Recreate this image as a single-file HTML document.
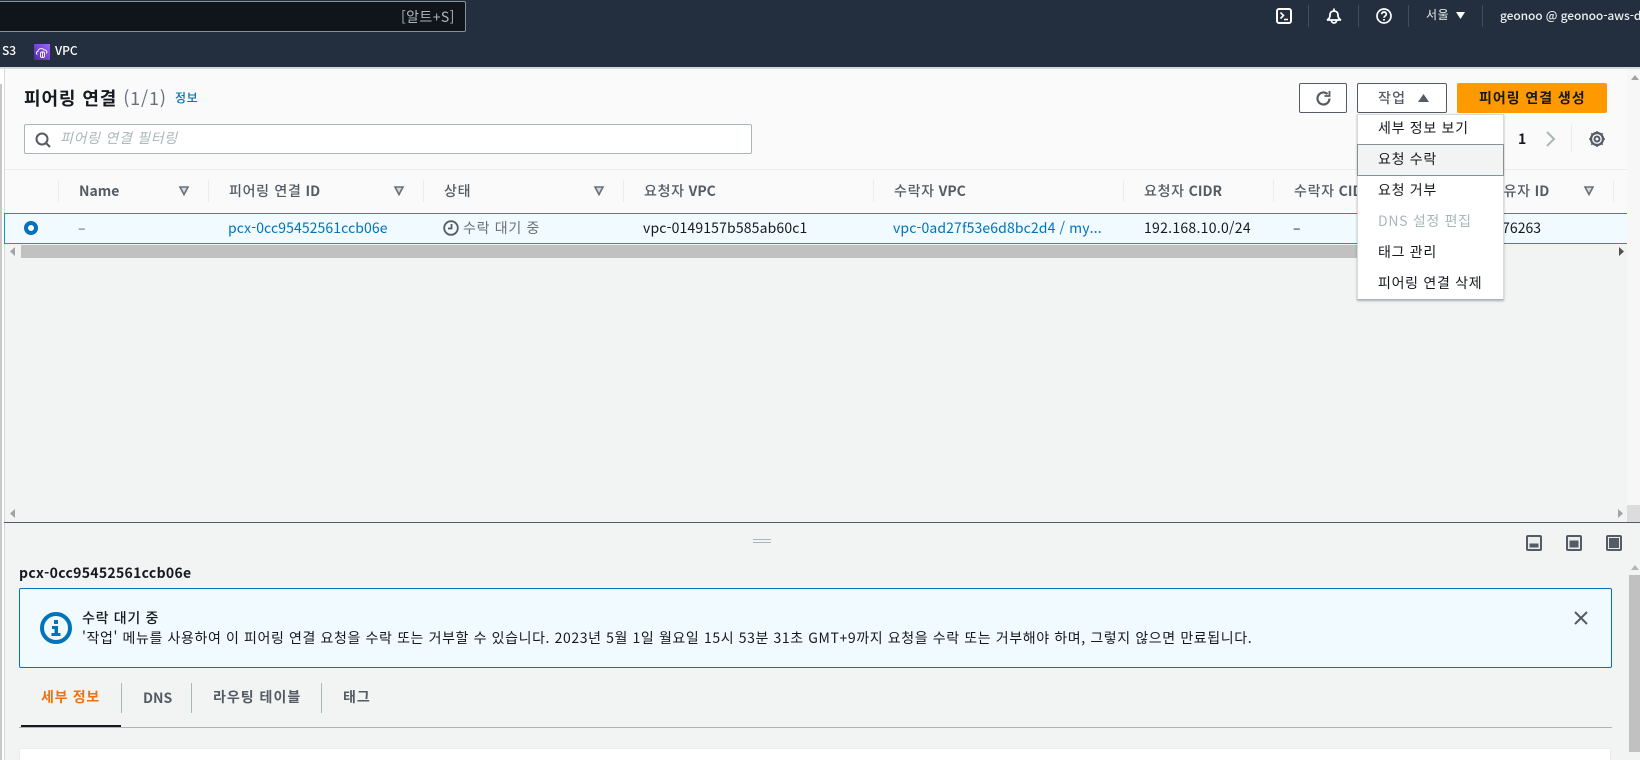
<!DOCTYPE html>
<html lang="ko">
<head>
<meta charset="utf-8">
<style>
html,body{margin:0;padding:0;width:1640px;height:760px;overflow:hidden;background:#f2f3f3}
body{position:relative;font-family:"Noto Sans CJK KR","Liberation Sans",sans-serif;font-size:14px;color:#16191f}
.a{position:absolute}
.t{position:absolute;white-space:nowrap;line-height:20px}
.b{font-weight:700}
.k{letter-spacing:.7px}
.h{font-weight:700;color:#545b64}
.h span{font-weight:500;letter-spacing:.7px}
.l{color:#0073bb}
.sep{position:absolute;width:1px;background:#eaeded;top:180px;height:22px}
svg{position:absolute;overflow:visible}
.mi{position:absolute;left:1378px;white-space:nowrap;line-height:20px;color:#16191f;letter-spacing:.7px}
</style>
</head>
<body>
<!-- nav -->
<div class="a" style="left:0;top:0;width:1640px;height:67px;background:#232f3e"></div>
<div class="a" style="left:0;top:67px;width:1640px;height:2px;background:#d5dbdb"></div>
<div class="a" style="left:-2px;top:1px;width:466px;height:29px;background:#10151c;border:1px solid #879196;border-radius:2px"></div>
<div class="t" style="left:401px;top:7px;color:#aab7b8;font-size:14px;letter-spacing:.4px">[알트+S]</div>
<div class="t" style="left:2px;top:41px;color:#fff;font-size:12px;font-weight:500">S3</div>
<div class="a" style="left:34px;top:44px;width:16px;height:16px;background:linear-gradient(45deg,#4d27a8,#a166ff)"></div>
<svg style="left:34px;top:44px" width="16" height="16" viewBox="0 0 16 16" fill="none" stroke="#fff" stroke-width=".9"><path d="M3.500 10.500C2 10 2 7.500 4 7.300 4.200 4.500 8.500 3.500 10 6c2-.5 3.500 1.500 2.500 3.500"/><rect x="6.500" y="8" width="4" height="5.500" rx="1.500"/><path d="M8.500 8v5"/></svg>
<div class="t" style="left:55px;top:41px;color:#fff;font-size:12px;font-weight:500">VPC</div>

<svg style="left:1276px;top:8px" width="16" height="16" viewBox="0 0 16 16" fill="none" stroke="#fff"><rect x="1" y="1" width="14" height="14" rx="2" stroke-width="2"/><path d="M4.500 4.500 7.500 7.500 4.500 10.500" stroke-width="1.600"/><path d="M8 11.500h4" stroke-width="1.600"/></svg>
<div class="a" style="left:1308px;top:5px;width:1px;height:22px;background:#414d5c"></div>
<svg style="left:1326px;top:8px" width="16" height="16" viewBox="0 0 16 16" fill="none" stroke="#fff" stroke-width="1.800"><path d="M1 12C3.500 11 4 9 4 7 4 4.500 5.800 3 8 3 10.200 3 12 4.500 12 7 12 9 12.500 11 15 12Z"/><path d="M8 .5v2.500"/><path d="M5.500 12.500a2.500 2.500 0 0 0 5 0"/></svg>
<div class="a" style="left:1358px;top:5px;width:1px;height:22px;background:#414d5c"></div>
<svg style="left:1376px;top:8px" width="16" height="16" viewBox="0 0 16 16" fill="none" stroke="#fff" stroke-width="1.700"><circle cx="8" cy="8" r="7"/><path d="M5.700 6.200C5.800 3.300 10.300 3.300 10.300 6.200 10.300 8 8 8 8 9.800"/><path d="M8 11v1.600"/></svg>
<div class="a" style="left:1408px;top:5px;width:1px;height:22px;background:#414d5c"></div>
<div class="t" style="left:1426px;top:5px;color:#eaeded;font-size:12px;letter-spacing:.6px">서울</div>
<svg style="left:1456px;top:12px" width="9" height="7" viewBox="0 0 9 7"><path d="M0 0h9L4.500 7Z" fill="#fff"/></svg>
<div class="a" style="left:1482px;top:5px;width:1px;height:22px;background:#414d5c"></div>
<div class="t" style="left:1500px;top:6px;color:#eaeded;font-size:12px;font-weight:500;letter-spacing:-.1px">geonoo @ geonoo-aws-dl</div>

<!-- left gutter -->
<div class="a" style="left:0;top:69px;width:4px;height:691px;background:#fff"></div>
<div class="a" style="left:0;top:84px;width:2px;height:676px;background:#c8c8c8"></div>
<div class="a" style="left:4px;top:69px;width:1px;height:691px;background:#d5dbdb"></div>

<!-- header -->
<div class="a" style="left:5px;top:69px;width:1622px;height:100px;background:#fafafa"></div>
<div class="a" style="left:5px;top:169px;width:1622px;height:44px;background:#fafafa;border-top:1px solid #eaeded;box-sizing:border-box"></div>
<div class="t b" style="left:24px;top:86px;font-size:18px;line-height:24px;letter-spacing:.9px">피어링 연결 <span style="font-weight:400;color:#687078">(1/1)</span></div>
<div class="t" style="left:175px;top:88px;font-size:12px;color:#0073bb;font-weight:500;letter-spacing:.6px">정보</div>
<div class="a" style="left:24px;top:124px;width:728px;height:30px;box-sizing:border-box;background:#fff;border:1px solid #aab7b8;border-radius:2px"></div>
<svg style="left:35px;top:132px" width="16" height="16" viewBox="0 0 16 16" fill="none" stroke="#545b64" stroke-width="2"><circle cx="7" cy="7" r="5.500"/><path d="M11 11l4 4"/></svg>
<div class="t k" style="left:60px;top:128px;font-style:italic;color:#aab7b8">피어링 연결 필터링</div>

<!-- buttons -->
<div class="a" style="left:1299px;top:83px;width:48px;height:30px;box-sizing:border-box;background:#fff;border:1px solid #545b64;border-radius:2px"></div>
<svg style="left:1315px;top:90px" width="17" height="17" viewBox="0 0 17 17" fill="none" stroke="#545b64" stroke-width="2.200"><path d="M14.500 8.500A6 6 0 1 1 12.500 4"/><path d="M14.500 1v5h-5" stroke-width="1.800"/></svg>
<div class="a" style="left:1357px;top:83px;width:90px;height:30px;box-sizing:border-box;background:#fff;border:1px solid #545b64;border-radius:2px"></div>
<div class="t" style="left:1378px;top:88px;color:#545b64;font-weight:500;letter-spacing:1.2px">작업</div>
<svg style="left:1418px;top:94px" width="11" height="8" viewBox="0 0 11 8"><path d="M0 8L5.500 0 11 8Z" fill="#545b64"/></svg>
<div class="a" style="left:1457px;top:83px;width:150px;height:30px;background:#ff9900;border-radius:2px"></div>
<div class="t" style="left:1479px;top:88px;font-weight:700;color:#16191f;letter-spacing:.95px">피어링 연결 생성</div>

<!-- pagination -->
<div class="t b" style="left:1518px;top:129px;color:#16191f">1</div>
<svg style="left:1546px;top:131px" width="10" height="16" viewBox="0 0 10 16" fill="none" stroke="#aab7b8" stroke-width="2"><path d="M1 1l7 7-7 7"/></svg>
<div class="a" style="left:1571px;top:124px;width:1px;height:28px;background:#eaeded"></div>
<svg style="left:1589px;top:131px" width="16" height="16" viewBox="0 0 16 16" fill="none" stroke="#545b64" stroke-width="2"><circle cx="8" cy="8" r="2.500"/><circle cx="8" cy="8" r="6" stroke-width="2.200"/><path d="M8 0v2M8 14v2M0 8h2M14 8h2M2.300 2.300l1.400 1.400M12.300 12.300l1.400 1.400M2.300 13.700l1.400-1.400M12.300 3.700l1.400-1.400" stroke-width="1.500"/></svg>

<!-- table head -->
<div class="sep" style="left:58px"></div>
<div class="sep" style="left:208px"></div>
<div class="sep" style="left:423px"></div>
<div class="sep" style="left:623px"></div>
<div class="sep" style="left:873px"></div>
<div class="sep" style="left:1123px"></div>
<div class="sep" style="left:1273px"></div>
<div class="sep" style="left:1613px"></div>
<div class="t h" style="left:79px;top:181px">Name</div>
<div class="t h" style="left:229px;top:181px"><span>피어링 연결</span> ID</div>
<div class="t h" style="left:444px;top:181px"><span>상태</span></div>
<div class="t h" style="left:644px;top:181px"><span>요청자</span> VPC</div>
<div class="t h" style="left:894px;top:181px"><span>수락자</span> VPC</div>
<div class="t h" style="left:1144px;top:181px"><span>요청자</span> CIDR</div>
<div class="t h" style="left:1294px;top:181px"><span>수락자</span> CIDR</div>
<div class="t h" style="left:1490px;top:181px"><span>소유자</span> ID</div>
<svg style="left:179px;top:186px" width="10" height="10" viewBox="0 0 10 10" fill="#d5dbdb" stroke="#687078" stroke-width="1.600"><path d="M1 1h8L5 8.500Z"/></svg>
<svg style="left:394px;top:186px" width="10" height="10" viewBox="0 0 10 10" fill="#d5dbdb" stroke="#687078" stroke-width="1.600"><path d="M1 1h8L5 8.500Z"/></svg>
<svg style="left:594px;top:186px" width="10" height="10" viewBox="0 0 10 10" fill="#d5dbdb" stroke="#687078" stroke-width="1.600"><path d="M1 1h8L5 8.500Z"/></svg>
<svg style="left:1584px;top:186px" width="10" height="10" viewBox="0 0 10 10" fill="#d5dbdb" stroke="#687078" stroke-width="1.600"><path d="M1 1h8L5 8.500Z"/></svg>

<!-- row -->
<div class="a" style="left:4px;top:213px;width:1623px;height:31px;box-sizing:border-box;background:#f1faff;border:1px solid #0a9cb8;border-right:0"></div>
<div class="a" style="left:24px;top:221px;width:14px;height:14px;box-sizing:border-box;border-radius:50%;background:#fff;border:4.500px solid #0073bb"></div>
<div class="t" style="left:78px;top:218px;color:#545b64">–</div>
<div class="t l" style="left:228px;top:218px;letter-spacing:.1px">pcx-0cc95452561ccb06e</div>
<svg style="left:443px;top:220px" width="16" height="16" viewBox="0 0 16 16" fill="none" stroke="#545b64" stroke-width="1.800"><circle cx="8" cy="8" r="6.800"/><path d="M8.500 4v4.500H5"/></svg>
<div class="t k" style="left:463px;top:218px;color:#687078">수락 대기 중</div>
<div class="t" style="left:643px;top:218px;letter-spacing:.15px">vpc-0149157b585ab60c1</div>
<div class="t l" style="left:893px;top:218px;letter-spacing:.12px">vpc-0ad27f53e6d8bc2d4 / my...</div>
<div class="t" style="left:1144px;top:218px;letter-spacing:.28px">192.168.10.0/24</div>
<div class="t" style="left:1293px;top:218px">–</div>
<div class="t" style="right:99px;top:218px">4476263</div>

<!-- h scrollbar -->
<div class="a" style="left:5px;top:244px;width:1622px;height:15px;background:#f2f3f3"></div>
<div class="a" style="left:21px;top:245px;width:1400px;height:13px;background:#c1c1c1"></div>
<svg style="left:10px;top:247px" width="6" height="9" viewBox="0 0 6 9"><path d="M5 0v9L0 4.500Z" fill="#a3a3a3"/></svg>
<svg style="left:1618px;top:247px" width="6" height="9" viewBox="0 0 6 9"><path d="M1 0v9L6 4.500Z" fill="#505050"/></svg>

<!-- right scrollbar top -->
<div class="a" style="left:1627px;top:69px;width:13px;height:453px;background:#f7f7f7"></div>
<svg style="left:1631px;top:75px" width="8" height="5" viewBox="0 0 8 5"><path d="M0 5h8L4 0Z" fill="#a3a3a3"/></svg>
<div class="a" style="left:1627px;top:505px;width:13px;height:17px;background:#dcdcdc"></div>

<!-- lower h scroll arrows -->
<svg style="left:10px;top:509px" width="6" height="9" viewBox="0 0 6 9"><path d="M5 0v9L0 4.500Z" fill="#a3a3a3"/></svg>
<svg style="left:1617px;top:509px" width="6" height="9" viewBox="0 0 6 9"><path d="M1 0v9L6 4.500Z" fill="#a3a3a3"/></svg>

<!-- divider -->
<div class="a" style="left:4px;top:522px;width:1636px;height:1px;background:#545b64"></div>
<div class="a" style="left:753px;top:539px;width:18px;height:1px;background:#aab7b8"></div>
<div class="a" style="left:753px;top:542px;width:18px;height:1px;background:#aab7b8"></div>

<svg style="left:1526px;top:535px" width="16" height="16" viewBox="0 0 16 16"><rect x="1" y="1" width="14" height="14" fill="#eaeded" stroke="#545b64" stroke-width="2" rx="1"/><rect x="3.500" y="8.500" width="9" height="4" fill="#545b64"/></svg>
<svg style="left:1566px;top:535px" width="16" height="16" viewBox="0 0 16 16"><rect x="1" y="1" width="14" height="14" fill="#eaeded" stroke="#545b64" stroke-width="2" rx="1"/><rect x="3.500" y="5.500" width="9" height="7" fill="#545b64"/></svg>
<svg style="left:1606px;top:535px" width="16" height="16" viewBox="0 0 16 16"><rect x="1" y="1" width="14" height="14" fill="#eaeded" stroke="#545b64" stroke-width="2" rx="1"/><rect x="3" y="3" width="10" height="10" fill="#545b64"/></svg>

<div class="t b" style="left:19px;top:563px;font-size:14px;letter-spacing:.3px">pcx-0cc95452561ccb06e</div>

<!-- alert -->
<div class="a" style="left:19px;top:588px;width:1593px;height:80px;box-sizing:border-box;background:#f1faff;border:1px solid #0073bb;border-radius:2px"></div>
<svg style="left:40px;top:612px" width="32" height="32" viewBox="0 0 32 32" fill="none"><circle cx="16" cy="16" r="14" stroke="#0073bb" stroke-width="4"/><rect x="14" y="8" width="4" height="4" fill="#0073bb"/><path d="M12 14h6v7h2.500v3h-9v-3h3v-4H12Z" fill="#0073bb"/></svg>
<div class="t k" style="left:82px;top:608px;font-weight:500">수락 대기 중</div>
<div class="t" style="left:82px;top:628px;letter-spacing:.61px">'작업' 메뉴를 사용하여 이 피어링 연결 요청을 수락 또는 거부할 수 있습니다. 2023년 5월 1일 월요일 15시 53분 31초 GMT+9까지 요청을 수락 또는 거부해야 하며, 그렇지 않으면 만료됩니다.</div>
<svg style="left:1574px;top:611px" width="14" height="14" viewBox="0 0 14 14" fill="none" stroke="#545b64" stroke-width="2"><path d="M1 1l12 12M13 1L1 13"/></svg>

<!-- tabs -->
<div class="t b k" style="left:41px;top:687px;color:#ec7211">세부 정보</div>
<div class="a" style="left:121px;top:683px;width:1px;height:30px;background:#aab7b8"></div>
<div class="t b" style="left:143px;top:688px;color:#545b64">DNS</div>
<div class="a" style="left:191px;top:683px;width:1px;height:30px;background:#aab7b8"></div>
<div class="t b" style="left:213px;top:687px;color:#545b64;letter-spacing:1px">라우팅 테이블</div>
<div class="a" style="left:321px;top:683px;width:1px;height:30px;background:#aab7b8"></div>
<div class="t b" style="left:343px;top:687px;color:#545b64;letter-spacing:1px">태그</div>
<div class="a" style="left:19px;top:727px;width:1593px;height:1px;background:#aab7b8"></div>
<div class="a" style="left:21px;top:725px;width:100px;height:2px;background:#16191f"></div>
<div class="a" style="left:19px;top:748px;width:1592px;height:12px;background:#fff;border:1px solid #eaeded;border-bottom:0;box-sizing:border-box"></div>

<!-- right scrollbar bottom -->
<svg style="left:1631px;top:565px" width="8" height="5" viewBox="0 0 8 5"><path d="M0 5h8L4 0Z" fill="#b5b5b5"/></svg>
<div class="a" style="left:1629px;top:575px;width:11px;height:177px;background:#c1c1c1"></div>

<!-- dropdown -->
<div class="a" style="left:1357px;top:114px;width:147px;height:186px;box-sizing:border-box;background:#fff;border:1px solid #d5dbdb;border-bottom:1px solid #aab7b8;box-shadow:0 1px 2px rgba(0,28,36,.3)"></div>
<div class="a" style="left:1357px;top:144px;width:147px;height:32px;box-sizing:border-box;background:#f2f3f3;border:1px solid #879196"></div>
<div class="mi" style="top:118px">세부 정보 보기</div>
<div class="mi" style="top:149px">요청 수락</div>
<div class="mi" style="top:180px">요청 거부</div>
<div class="mi" style="top:211px;color:#aab7b8">DNS 설정 편집</div>
<div class="mi" style="top:242px">태그 관리</div>
<div class="mi" style="top:273px">피어링 연결 삭제</div>
</body>
</html>
